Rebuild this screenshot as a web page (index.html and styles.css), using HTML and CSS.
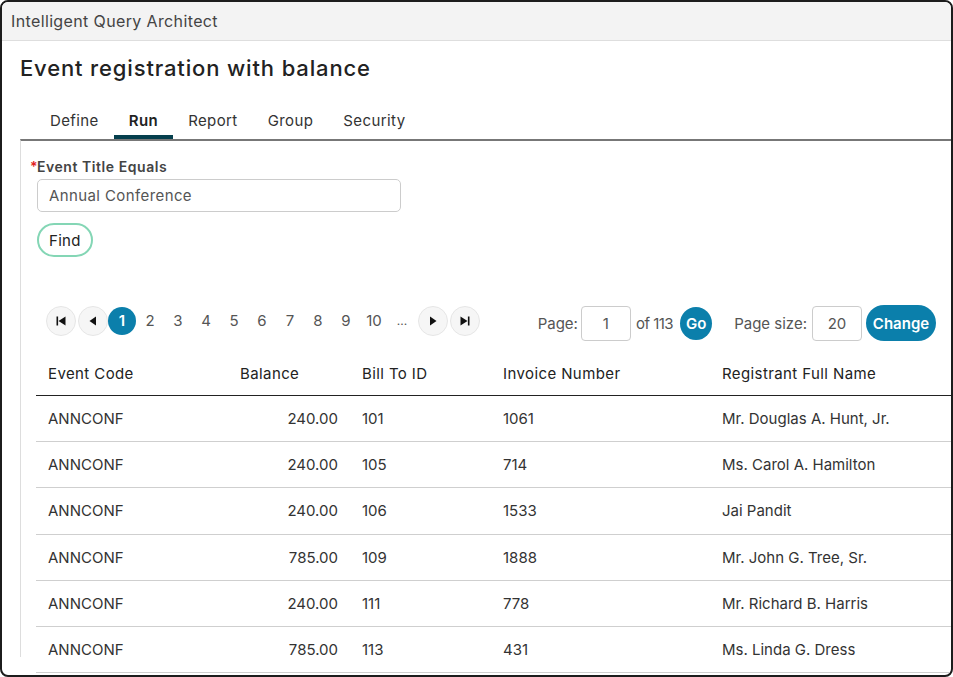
FILE: index.html
```html
<!DOCTYPE html>
<html lang="en">
<head>
  <meta charset="UTF-8">
  <meta name="viewport" content="width=device-width, initial-scale=1">
  <title>Intelligent Query Architect</title>
  <link rel="stylesheet" href="styles.css">
</head>
<body>

  <div class="window">
    <div class="titlebar">Intelligent Query Architect</div>

    <div class="page">
      <h1 class="page-title">Event registration with balance</h1>

      <ul class="tabs">
        <li class="tab">Define</li>
        <li class="tab active">Run</li>
        <li class="tab">Report</li>
        <li class="tab">Group</li>
        <li class="tab">Security</li>
      </ul>

      <div class="panel">
        <div class="field">
          <label class="field-label"><span class="required">*</span>Event Title Equals</label>
          <input class="text-input" type="text" value="Annual Conference">
        </div>
        <button class="find-btn">Find</button>

        <!-- Pager -->
        <div class="pager">
          <div class="pager-pages">
            <button class="nav-btn" title="First">
              <svg width="12" height="12" viewBox="0 0 12 12"><rect x="1.5" y="1.5" width="1.6" height="9" fill="#111"/><path d="M10.5 1.5 L3.5 6 L10.5 10.5 Z" fill="#111"/></svg>
            </button>
            <button class="nav-btn" title="Previous">
              <svg width="12" height="12" viewBox="0 0 12 12"><path d="M9 1.5 L2.5 6 L9 10.5 Z" fill="#111"/></svg>
            </button>
            <span class="page-num current">1</span>
            <span class="page-num">2</span>
            <span class="page-num">3</span>
            <span class="page-num">4</span>
            <span class="page-num">5</span>
            <span class="page-num">6</span>
            <span class="page-num">7</span>
            <span class="page-num">8</span>
            <span class="page-num">9</span>
            <span class="page-num">10</span>
            <span class="page-num dots">...</span>
            <button class="nav-btn" title="Next">
              <svg width="12" height="12" viewBox="0 0 12 12"><path d="M3 1.5 L9.5 6 L3 10.5 Z" fill="#111"/></svg>
            </button>
            <button class="nav-btn" title="Last">
              <svg width="12" height="12" viewBox="0 0 12 12"><path d="M1.5 1.5 L8.5 6 L1.5 10.5 Z" fill="#111"/><rect x="8.9" y="1.5" width="1.6" height="9" fill="#111"/></svg>
            </button>
          </div>

          <div class="pager-controls">
            <span class="pager-label">Page:</span>
            <input class="small-input" type="text" value="1">
            <span class="pager-label of">of 113</span>
            <button class="go-btn">Go</button>
            <span class="pager-label size">Page size:</span>
            <input class="small-input" type="text" value="20">
            <button class="change-btn">Change</button>
          </div>
        </div>

        <!-- Results -->
        <table class="results">
          <colgroup>
            <col style="width: 192px">
            <col style="width: 122px">
            <col style="width: 141px">
            <col style="width: 219px">
            <col>
          </colgroup>
          <thead>
            <tr>
              <th>Event Code</th>
              <th>Balance</th>
              <th>Bill To ID</th>
              <th>Invoice Number</th>
              <th>Registrant Full Name</th>
            </tr>
          </thead>
          <tbody>
            <tr><td>ANNCONF</td><td class="num">240.00</td><td>101</td><td>1061</td><td>Mr. Douglas A. Hunt, Jr.</td></tr>
            <tr><td>ANNCONF</td><td class="num">240.00</td><td>105</td><td>714</td><td>Ms. Carol A. Hamilton</td></tr>
            <tr><td>ANNCONF</td><td class="num">240.00</td><td>106</td><td>1533</td><td>Jai Pandit</td></tr>
            <tr><td>ANNCONF</td><td class="num">785.00</td><td>109</td><td>1888</td><td>Mr. John G. Tree, Sr.</td></tr>
            <tr><td>ANNCONF</td><td class="num">240.00</td><td>111</td><td>778</td><td>Mr. Richard B. Harris</td></tr>
            <tr><td>ANNCONF</td><td class="num">785.00</td><td>113</td><td>431</td><td>Ms. Linda G. Dress</td></tr>
          </tbody>
        </table>
      </div>
    </div>
  </div>

</body>
</html>
```

FILE: styles.css
```css
body {
  font-family: Inter, "Open Sans", sans-serif;
  margin: 0;
  padding: 0;
  background-color: #fff;
  color: #333;
  overflow: hidden;
}

.window {
  box-sizing: border-box;
  width: 953px;
  height: 677px;
  border: 2px solid #1c1c1c;
  border-radius: 8px;
  overflow: hidden;
  display: flex;
  flex-direction: column;
  background-color: #fff;
}

.titlebar {
  height: 38px;
  line-height: 38px;
  padding-left: 9px;
  background-color: #f3f3f3;
  border-bottom: 1px solid #dedede;
  font-size: 16px;
  letter-spacing: 0.37px;
  color: #444;
  flex-shrink: 0;
}

.page {
  flex: 1;
  min-height: 0;
  display: flex;
  flex-direction: column;
  padding: 0 0 18px 18px;
}

.page-title {
  margin: 12px 0 0 0;
  font-size: 22px;
  line-height: 30px;
  font-weight: 500;
  letter-spacing: 0.85px;
  color: #222;
}

/* Tabs */
.tabs {
  list-style: none;
  margin: 17px 0 0 15px;
  padding: 0;
  display: flex;
}

.tab {
  padding: 10px 15px 3px 15px;
  line-height: 22px;
  font-size: 15px;
  letter-spacing: 0.4px;
  color: #333;
  border-bottom: 4px solid transparent;
}

.tab.active {
  font-weight: 600;
  color: #222;
  border-bottom-color: #053f4d;
}

/* The panel keeps its height; the table runs on under the window edge */
.panel {
  flex: 1;
  min-height: 0;
  border-top: 2px solid #777;
  border-left: 1px solid #ddd;
  padding: 16px 15px 0 16px;
}

/* Search field */
.field-label {
  display: block;
  font-size: 14px;
  line-height: 20px;
  font-weight: 600;
  letter-spacing: 0.55px;
  color: #444;
  margin-bottom: 2px;
}

.required {
  color: #e02020;
  margin-left: -7px;
  display: inline-block;
  width: 7px;
}

.text-input {
  box-sizing: border-box;
  width: 364px;
  height: 33px;
  border: 1px solid #ccc;
  border-radius: 5px;
  padding: 0 11px;
  font-family: inherit;
  font-size: 15px;
  letter-spacing: 0.4px;
  color: #555;
}

.find-btn {
  display: block;
  box-sizing: border-box;
  margin-top: 11px;
  height: 34px;
  padding: 0 10px;
  border: 2px solid #84d6b5;
  border-radius: 17px;
  background-color: #fff;
  font-family: inherit;
  font-size: 15px;
  letter-spacing: 0.3px;
  color: #222;
}

/* Pager */
.pager {
  display: flex;
  justify-content: space-between;
  align-items: center;
  margin: 48px 0 0 9px;
  height: 36px;
}

.pager-pages {
  display: flex;
  align-items: center;
  gap: 2px;
  margin-top: -4px;
}

.nav-btn {
  box-sizing: border-box;
  width: 30px;
  height: 30px;
  border-radius: 50%;
  border: 1px solid #e6e6e6;
  background-color: #f6f6f6;
  padding: 0;
  display: flex;
  align-items: center;
  justify-content: center;
}

.page-num {
  width: 28px;
  height: 28px;
  line-height: 28px;
  text-align: center;
  font-size: 15px;
  color: #555;
  margin-left: -2px;
}

.page-num.current {
  border-radius: 50%;
  background-color: #0b7fab;
  color: #fff;
  font-weight: 600;
}

.page-num.dots {
  font-size: 12px;
}

.pager-controls {
  display: flex;
  align-items: center;
}

.pager-label {
  font-size: 15px;
  color: #555;
}

.pager-label.of {
  margin: 0 7px 0 5px;
  letter-spacing: -0.5px;
}

.pager-label.size {
  margin: 0 2px 0 22px;
}

.small-input {
  box-sizing: border-box;
  width: 50px;
  height: 35px;
  border: 1px solid #ccc;
  border-radius: 4px;
  text-align: center;
  font-family: inherit;
  font-size: 15px;
  color: #555;
  margin-left: 3px;
}

.go-btn {
  width: 32px;
  height: 33px;
  border: none;
  border-radius: 50%;
  padding: 0;
  background-color: #0b7fab;
  color: #fff;
  font-family: inherit;
  font-size: 15px;
  font-weight: 600;
}

.change-btn {
  height: 36px;
  width: 70px;
  margin-left: 4px;
  border: none;
  border-radius: 18px;
  padding: 0;
  background-color: #0b7fab;
  color: #fff;
  font-family: inherit;
  font-size: 15px;
  font-weight: 600;
}

/* Results table */
.results {
  border-collapse: collapse;
  table-layout: fixed;
  width: calc(100% + 16px);
  margin: 11px -15px 0 -1px;
  font-size: 15px;
}

.results th {
  text-align: left;
  font-weight: 400;
  letter-spacing: 0.4px;
  color: #222;
  height: 43px;
  padding: 0 12px;
  border-bottom: 1px solid #222;
}

.results td {
  height: 45.2px;
  padding: 0 12px;
  color: #333;
  border-bottom: 1px solid #cfcfcf;
  white-space: nowrap;
}

.results td.num {
  text-align: right;
}
```
